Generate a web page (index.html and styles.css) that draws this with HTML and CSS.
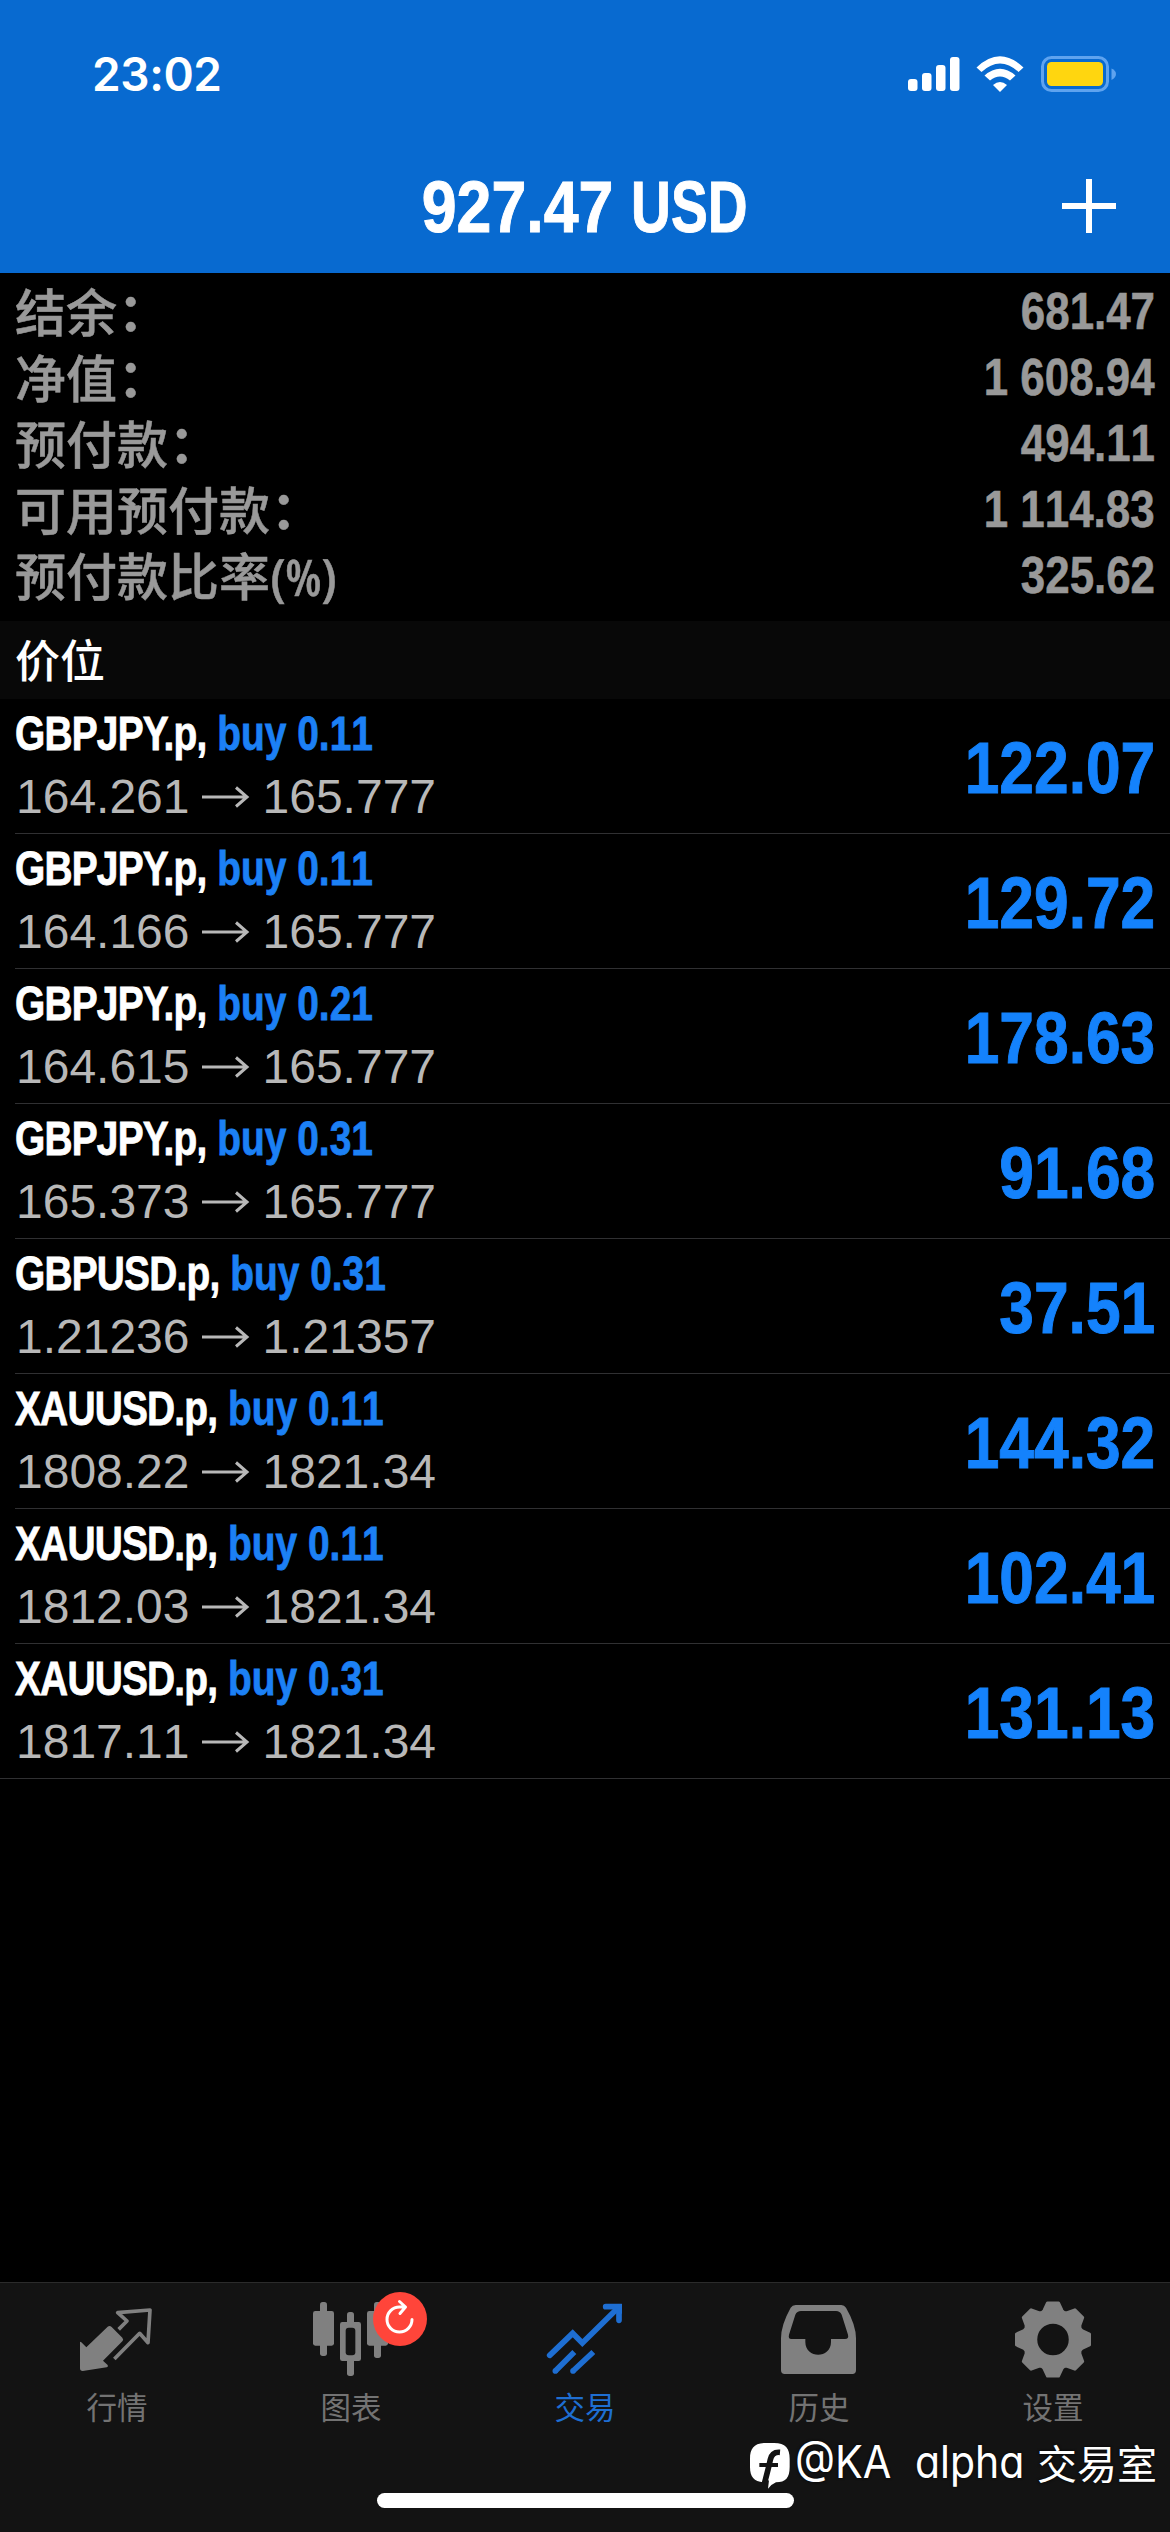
FILE: index.html
```html
<!DOCTYPE html>
<html lang="zh-CN">
<head>
<meta charset="utf-8">
<title>交易</title>
<link rel="stylesheet" href="styles.css">
</head>
<body>
<div class="screen">
  <header class="header">
    <div class="status">
      <span class="clock">23:02</span>
      <div class="status-icons">
        <svg class="signal" viewBox="0 0 52 36"><rect x="0" y="23" width="9.5" height="12" rx="3"/><rect x="14" y="17" width="9.5" height="18" rx="3"/><rect x="28" y="9" width="9.5" height="26" rx="3"/><rect x="42" y="1" width="9.5" height="34" rx="3"/></svg>
        <svg class="wifi" viewBox="0 0 48 36"><path d="M0.5 11.5Q24-11 47.5 11.5L42.5 16Q24-1 5.500 16Z"/><path d="M8.500 19.500Q24 6 39.500 19.500L34 24.500Q24 16.500 14 24.500Z"/><path d="M17 29Q24 23 31 29L24 36Z"/></svg>
        <svg class="battery" viewBox="0 0 76 36"><rect x="1.500" y="1.500" width="65" height="33" rx="9" fill="none" stroke="#5ea3ef" stroke-width="3"/><rect x="6" y="6" width="56" height="24" rx="4.500" fill="#ffd60f"/><path d="M70.500 12.500Q75 14.500 75 18T70.500 24Z" fill="#5ea3ef"/></svg>
      </div>
    </div>
    <div class="navbar">
      <h1 class="title">927.47 <span class="currency">USD</span></h1>
      <svg class="plus" viewBox="0 0 54 54"><path d="M27 0V54M0 27H54"/></svg>
    </div>
  </header>

  <dl class="summary">
    <div class="summary-row"><dt>结余<span class="colon">：</span></dt><dd>681.47</dd></div>
    <div class="summary-row"><dt>净值<span class="colon">：</span></dt><dd>1 608.94</dd></div>
    <div class="summary-row"><dt>预付款<span class="colon">：</span></dt><dd>494.11</dd></div>
    <div class="summary-row"><dt>可用预付款<span class="colon">：</span></dt><dd>1 114.83</dd></div>
    <div class="summary-row"><dt>预付款比率<span class="unit">(%)</span></dt><dd>325.62</dd></div>
  </dl>

  <h2 class="section">价位</h2>

  <ul class="positions">
    <li class="position"><div class="info"><p class="deal"><b>GBPJPY.p,</b> buy 0.11</p><p class="prices">164.261 <svg class="arrow" viewBox="0 0 48 24"><path d="M0 12H45M34 2.500L45 12L34 21.500"/></svg> 165.777</p></div><span class="profit">122.07</span></li>
    <li class="position"><div class="info"><p class="deal"><b>GBPJPY.p,</b> buy 0.11</p><p class="prices">164.166 <svg class="arrow" viewBox="0 0 48 24"><path d="M0 12H45M34 2.500L45 12L34 21.500"/></svg> 165.777</p></div><span class="profit">129.72</span></li>
    <li class="position"><div class="info"><p class="deal"><b>GBPJPY.p,</b> buy 0.21</p><p class="prices">164.615 <svg class="arrow" viewBox="0 0 48 24"><path d="M0 12H45M34 2.500L45 12L34 21.500"/></svg> 165.777</p></div><span class="profit">178.63</span></li>
    <li class="position"><div class="info"><p class="deal"><b>GBPJPY.p,</b> buy 0.31</p><p class="prices">165.373 <svg class="arrow" viewBox="0 0 48 24"><path d="M0 12H45M34 2.500L45 12L34 21.500"/></svg> 165.777</p></div><span class="profit">91.68</span></li>
    <li class="position"><div class="info"><p class="deal"><b>GBPUSD.p,</b> buy 0.31</p><p class="prices">1.21236 <svg class="arrow" viewBox="0 0 48 24"><path d="M0 12H45M34 2.500L45 12L34 21.500"/></svg> 1.21357</p></div><span class="profit">37.51</span></li>
    <li class="position"><div class="info"><p class="deal"><b>XAUUSD.p,</b> buy 0.11</p><p class="prices">1808.22 <svg class="arrow" viewBox="0 0 48 24"><path d="M0 12H45M34 2.500L45 12L34 21.500"/></svg> 1821.34</p></div><span class="profit">144.32</span></li>
    <li class="position"><div class="info"><p class="deal"><b>XAUUSD.p,</b> buy 0.11</p><p class="prices">1812.03 <svg class="arrow" viewBox="0 0 48 24"><path d="M0 12H45M34 2.500L45 12L34 21.500"/></svg> 1821.34</p></div><span class="profit">102.41</span></li>
    <li class="position"><div class="info"><p class="deal"><b>XAUUSD.p,</b> buy 0.31</p><p class="prices">1817.11 <svg class="arrow" viewBox="0 0 48 24"><path d="M0 12H45M34 2.500L45 12L34 21.500"/></svg> 1821.34</p></div><span class="profit">131.13</span></li>
  </ul>

  <nav class="tabbar">
    <a class="tab">
      <svg class="icon" viewBox="51 90 240 240"><path fill="currentColor" d="M60 218Q60 213 64 217L79 232L143 170Q149 165 155 171L187 203Q192 209 187 214L129 272L143 285Q146 290 140 292L68 303Q60 303 60 295Z"/><path fill="none" stroke="currentColor" stroke-width="11" stroke-linejoin="round" d="M176 178L201 153L173 128L270 120L264 218L239 190L163 267" /></svg>
      <span class="label">行情</span>
    </a>
    <a class="tab">
      <svg class="icon" viewBox="753 90 240 240"><g fill="currentColor"><rect x="759" y="123" width="63" height="104" rx="7"/><rect x="780" y="96" width="21" height="162" rx="8"/><rect x="921" y="123" width="63" height="104" rx="7"/><rect x="942" y="96" width="21" height="168" rx="8"/><rect x="861" y="126" width="21" height="192" rx="8"/><rect x="840" y="156" width="63" height="117" rx="7"/></g><rect x="857" y="173" width="29" height="83" rx="9" fill="#131313"/></svg>
      <svg class="badge" viewBox="0 0 54 54"><circle cx="27" cy="27" r="27" fill="#ff453a"/><path fill="none" stroke="#fff" stroke-width="3" stroke-linecap="round" stroke-linejoin="round" d="M39 27.500A12.500 12.500 0 1 1 26.500 15H32.500M26.500 9.500L32.500 15L27 21.500"/></svg>
      <span class="label">图表</span>
    </a>
    <a class="tab active">
      <svg class="icon" viewBox="75 90 240 240"><g fill="none" stroke="currentColor" stroke-width="17"><path stroke-linecap="round" d="M89 256L158 190L187 219L296 112"/><path stroke-linecap="round" d="M257 110H297V151"/><path d="M163 246L106 303M220 246L159 303"/></g><g fill="currentColor"><circle cx="106" cy="303" r="8.500"/><circle cx="159" cy="303" r="8.500"/><path d="M275 102H306V133Z"/></g></svg>
      <span class="label">交易</span>
    </a>
    <a class="tab">
      <svg class="icon" viewBox="777 90 240 240"><path fill="currentColor" fill-rule="evenodd" d="M827 105H964Q973 105 978 113Q1008 165 1008 205V301Q1008 312 997 312H794Q783 312 783 301V205Q783 165 812 113Q817 105 827 105ZM843 123Q831 123 826 134L807 194Q804 207 814 207H856V216C856 267 933 267 933 216V207H975Q987 207 984 194L965 134Q960 123 948 123Z"/></svg>
      <span class="label">历史</span>
    </a>
    <a class="tab">
      <svg class="icon" viewBox="-40 -39.500 80 80"><g fill="currentColor" stroke="currentColor" stroke-width="3" stroke-linejoin="round"><path id="tooth" d="M-13-25L-9-29L-5.500-36.500H5.500L9-29L13-25Z"/><use href="#tooth" transform="rotate(45)"/><use href="#tooth" transform="rotate(90)"/><use href="#tooth" transform="rotate(135)"/><use href="#tooth" transform="rotate(180)"/><use href="#tooth" transform="rotate(225)"/><use href="#tooth" transform="rotate(270)"/><use href="#tooth" transform="rotate(315)"/></g><circle r="22.500" fill="none" stroke="currentColor" stroke-width="13.500"/></svg>
      <span class="label">设置</span>
    </a>
  </nav>

  <div class="home-indicator"></div>
  <div class="watermark">
    <svg class="mark" viewBox="688 528 120 138"><path fill="#fff" d="M735 528H760C795 528 807 545 807 575V600C807 632 795 646 766 646Q752 652 742 665L745 640L728 646C700 643 688 630 688 600V575C688 545 700 528 735 528Z"/><path fill="none" stroke="#131313" stroke-width="17" d="M731 650Q743 606 749 578Q754 554 778 556"/><path stroke="#131313" stroke-width="12" d="M716 594H772"/></svg>
    <span class="handle">@KA</span><span class="word">alpha</span><span class="room">交易室</span>
  </div>
</div>
</body>
</html>
```
FILE: styles.css
```css
* { box-sizing: border-box; margin: 0; padding: 0; }

body {
  background: #000;
  font-family: "Liberation Sans", "Noto Sans CJK SC", sans-serif;
}

svg { display: block; }

.screen {
  position: relative;
  display: flex;
  flex-direction: column;
  width: 1170px;
  height: 2532px;
  overflow: hidden;
  background: #000;
}

/* Header */
.header { height: 273px; background: #086ad0; color: #fff; }

.status {
  display: flex;
  justify-content: space-between;
  align-items: center;
  height: 148px;
  padding: 0 53px 0 92px;
}
.clock { font: 600 46px/60px Inter, sans-serif; letter-spacing: -.4px; }
.status-icons { display: flex; align-items: center; fill: #fff; }
.signal { width: 52px; height: 36px; margin-right: 16px; }
.wifi { width: 48px; height: 36px; margin-right: 17px; }
.battery { width: 76px; height: 36px; }

.navbar {
  display: grid;
  grid-template-columns: 54px 1fr 54px;
  align-items: center;
  height: 116px;
  padding: 0 54px;
}
.title {
  grid-column: 2;
  padding-top: 2px;
  font-size: 72px;
  line-height: 80px;
  font-weight: 700;
  white-space: pre;
  text-align: center;
  -webkit-text-stroke: 1px currentColor;
  transform: scaleX(.87);
}
.currency {
  display: inline-block;
  margin-right: -17px;
  transform: scaleX(.88);
  transform-origin: left;
}
.plus { width: 54px; height: 54px; stroke: #fff; stroke-width: 6; }

/* Account summary */
.summary {
  height: 348px;
  padding: 6px 15px 0;
  color: #999;
}
.summary-row {
  display: flex;
  justify-content: space-between;
  height: 66px;
  font-size: 51px;
  line-height: 66px;
}
.summary dt {
  position: relative;
  top: -2px;
  font-family: "Noto Sans CJK SC", sans-serif;
  font-weight: 500;
  -webkit-text-stroke: .5px currentColor;
}
.summary dd {
  font-weight: 700;
  font-kerning: none;
  -webkit-text-stroke: .6px currentColor;
  transform: scaleX(.86);
  transform-origin: right;
}
.colon { display: inline-block; font-weight: 700; transform: translate(1px, -1px); }
.unit { font: 600 51px/1 "Open Sans", sans-serif; font-stretch: 86%; }

.section {
  height: 78px;
  padding-left: 15px;
  background: #080808;
  color: #fff;
  font: 500 45px/76px "Noto Sans CJK SC", sans-serif;
}

/* Open positions */
.positions { list-style: none; }
.position {
  position: relative;
  display: flex;
  justify-content: space-between;
  height: 135px;
  padding: 8px 15px 0;
}
.position::after {
  content: "";
  position: absolute;
  left: 15px;
  right: 0;
  bottom: 0;
  height: 1px;
  background: #303032;
}
.position:last-child::after { left: 0; }
.deal {
  color: #1c80f5;
  font-size: 48px;
  line-height: 54px;
  font-weight: 700;
  font-kerning: none;
  white-space: nowrap;
  -webkit-text-stroke: .8px currentColor;
  transform: scaleX(.81);
  transform-origin: left;
}
.deal b { color: #fff; font-kerning: normal; letter-spacing: -1px; }
.prices {
  display: flex;
  align-items: center;
  margin-top: 9px;
  padding-left: 1px;
  color: #b8b8b8;
  font-size: 48px;
  line-height: 54px;
  font-kerning: none;
}
.arrow { width: 48px; height: 24px; margin: 0 13px 0 12px; fill: none; stroke: #b8b8b8; stroke-width: 3; }
.profit {
  color: #1482fc;
  font-size: 72px;
  line-height: 122px;
  font-weight: 700;
  font-kerning: none;
  -webkit-text-stroke: 1px currentColor;
  transform: scaleX(.865);
  transform-origin: right;
}

/* Tab bar */
.tabbar {
  display: grid;
  grid-template-columns: repeat(5, 1fr);
  height: 250px;
  margin-top: auto;
  padding-top: 17px;
  border-top: 1px solid #2b2b2b;
  background: #131313;
}
.tab {
  position: relative;
  display: flex;
  flex-direction: column;
  align-items: center;
  color: #808080;
}
.tab.active { color: #1e6ed2; }
.icon { width: 80px; height: 80px; }
.label {
  margin-top: 6px;
  font: 400 30.5px/40px "Noto Sans CJK SC", sans-serif;
  color: #737373;
}
.active .label { color: #1e6ed2; }
.badge { position: absolute; left: 139px; top: -8px; width: 54px; height: 54px; }

.home-indicator {
  position: absolute;
  left: 377px;
  bottom: 24px;
  width: 417px;
  height: 15px;
  border-radius: 8px;
  background: #fff;
}

.watermark {
  position: absolute;
  right: 13px;
  top: 2436px;
  display: flex;
  align-items: center;
  height: 52px;
  color: #fff;
  line-height: 52px;
  text-shadow: 0 0 3px #000;
}
.mark { width: 40px; height: 46px; margin: 8px 5px 0 0; }
.handle, .word {
  font-family: Inter, sans-serif;
  font-size: 45px;
  font-feature-settings: "cv11";
  transform-origin: left;
}
.handle { width: 120px; transform: scaleX(.92); }
.word { width: 122px; transform: scaleX(.91); }
.room { font: 400 40px/48px "Noto Sans CJK SC", sans-serif; }
```
